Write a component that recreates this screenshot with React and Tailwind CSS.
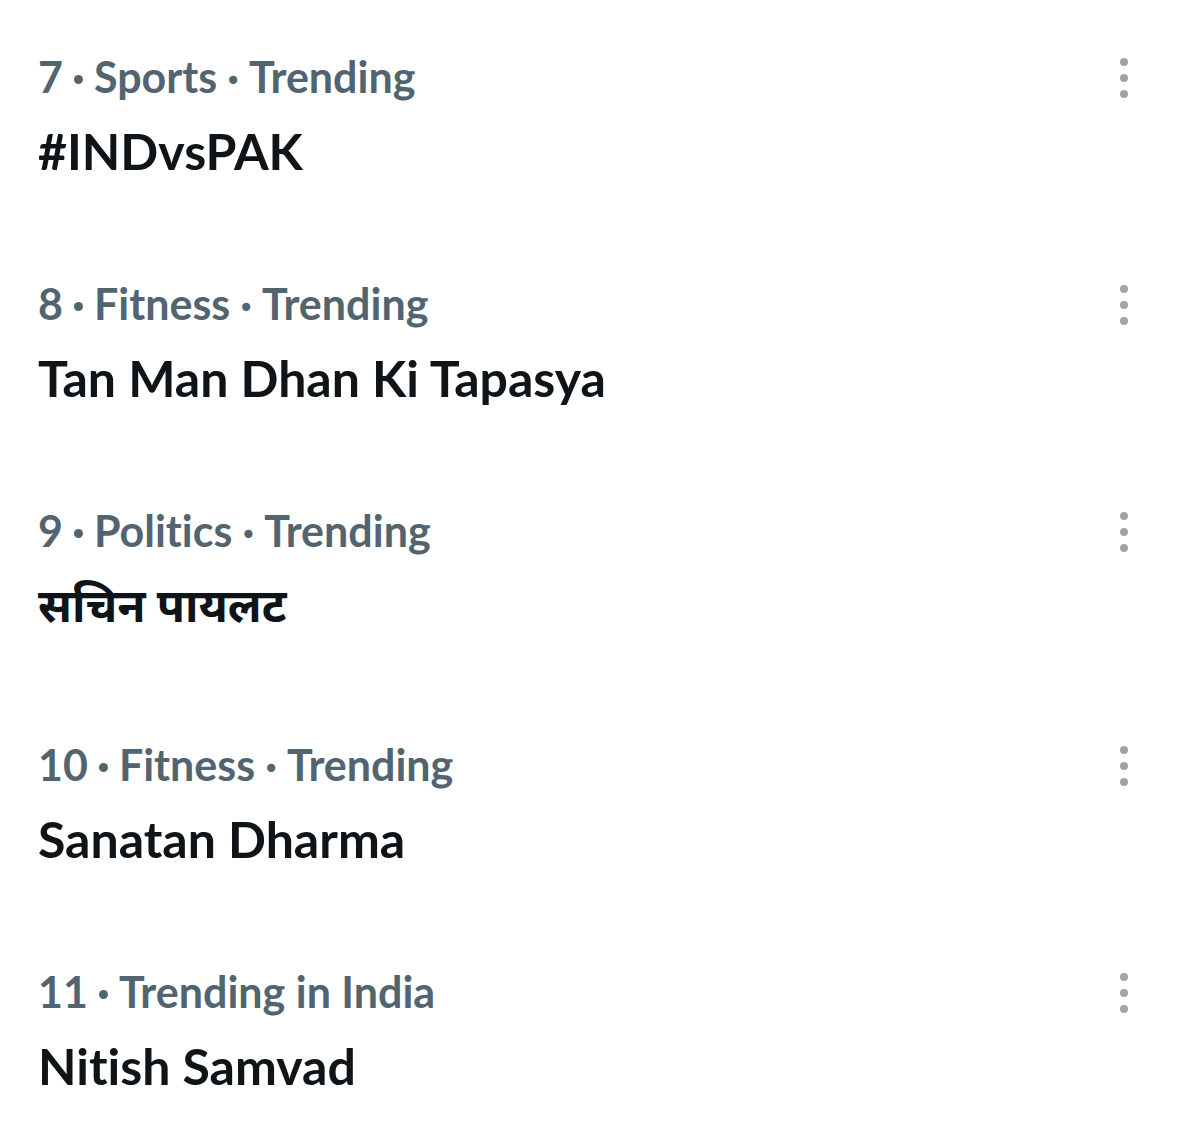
import { Fragment } from "react";

const TRENDS = [
  { rank: 7, meta: ["Sports", "Trending"], title: "#INDvsPAK" },
  { rank: 8, meta: ["Fitness", "Trending"], title: "Tan Man Dhan Ki Tapasya" },
  { rank: 9, meta: ["Politics", "Trending"], title: "सचिन पायलट", hindi: true },
  { rank: 10, meta: ["Fitness", "Trending"], title: "Sanatan Dharma" },
  { rank: 11, meta: ["Trending in India"], title: "Nitish Samvad" },
];

function MoreDots() {
  return (
    <div className="flex flex-col items-center gap-[8px] pt-[10px]">
      <span className="w-[8px] h-[8px] rounded-full bg-[#9ca4ab]" />
      <span className="w-[8px] h-[8px] rounded-full bg-[#9ca4ab]" />
      <span className="w-[8px] h-[8px] rounded-full bg-[#9ca4ab]" />
    </div>
  );
}

export default function App() {
  return (
    <div className="w-[1200px] h-[1132px] bg-white overflow-hidden font-['Lato','Noto_Sans',sans-serif] [font-variant-ligatures:none]">
      <div className="pt-[48px]">
        {TRENDS.map((t) => (
          <div key={t.rank} className={`flex items-start justify-between pl-[38px] pr-[72px] ${t.hindi ? "h-[234px]" : "h-[227px]"}`}>
            <div>
              <p className="flex items-center text-[43px] leading-[58px] font-bold text-[#536471]">
                <span>{t.rank}</span>
                <span className="mx-[11px] mt-[4px] w-[9px] h-[9px] rounded-full bg-[#536471]" />
                {t.meta.map((m, i) => (
                  <Fragment key={m}>
                    {i > 0 && <span className="mx-[10px]">·</span>}
                    <span>{m}</span>
                  </Fragment>
                ))}
              </p>
              <p className={`mt-[13px] leading-[64px] font-bold text-[#0f1419] ${t.hindi ? "text-[46px]" : "text-[50px]"}`}>{t.title}</p>
            </div>
            <MoreDots />
          </div>
        ))}
      </div>
    </div>
  );
}
